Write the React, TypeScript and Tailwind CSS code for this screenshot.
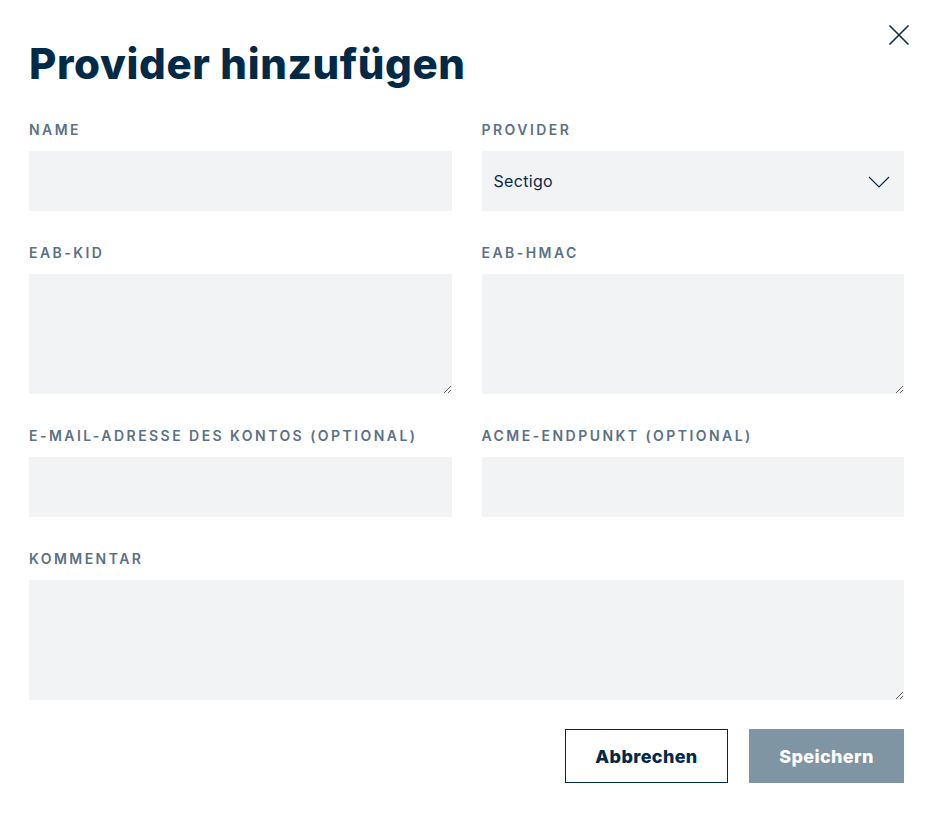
import React, { useState } from 'react';

const labelCls =
  "block h-5 mb-[11px] text-[14px] leading-5 font-semibold uppercase tracking-[0.175em] text-[#5b7185]";
const fieldCls =
  "block w-full bg-[#f2f3f5] text-[16px] tracking-[0.02em] text-[#0b2a45] px-3 outline-none";

function Field({ label, children }: { label: string; children: React.ReactNode }) {
  return (
    <div>
      <label className={labelCls}>{label}</label>
      {children}
    </div>
  );
}

export default function App() {
  const [provider, setProvider] = useState('Sectigo');

  return (
    <div className="min-h-[823px] bg-white font-['Inter',sans-serif] relative">
      <button className="absolute right-[22px] top-[23px] w-6 h-6 text-[#0b2a45]" aria-label="Schließen">
        <svg viewBox="0 0 24 24" width="24" height="24" fill="none" stroke="currentColor" strokeWidth="1.6">
          <path d="M2.5 2.5L21.5 21.5M21.5 2.5L2.5 21.5" />
        </svg>
      </button>

      <div className="px-[29px] pt-[38px]">
        <h1 className="text-[42px] leading-[52px] font-extrabold text-[#012a49] tracking-[0.015em]">
          Provider hinzufügen
        </h1>

        <div className="mt-[30px] grid grid-cols-2 gap-x-[30px] gap-y-[32px]">
          <Field label="Name">
            <input className={fieldCls + " h-[60px]"} />
          </Field>
          <Field label="Provider">
            <div className="relative">
              <select
                value={provider}
                onChange={e => setProvider(e.target.value)}
                className={fieldCls + " h-[60px] appearance-none"}
              >
                <option>Sectigo</option>
                <option>ZeroSSL</option>
                <option>Let's Encrypt</option>
              </select>
              <svg
                className="absolute right-[14px] top-[25px] pointer-events-none text-[#0b2a45]"
                width="22"
                height="12"
                viewBox="0 0 22 12"
                fill="none"
                stroke="currentColor"
                strokeWidth="1.2"
              >
                <path d="M1 1L11 11L21 1" />
              </svg>
            </div>
          </Field>

          <Field label="EAB-KID">
            <textarea className={fieldCls + " h-[120px] py-2"} />
          </Field>
          <Field label="EAB-HMAC">
            <textarea className={fieldCls + " h-[120px] py-2"} />
          </Field>

          <Field label="E-Mail-Adresse des Kontos (optional)">
            <input className={fieldCls + " h-[60px]"} />
          </Field>
          <Field label="ACME-Endpunkt (optional)">
            <input className={fieldCls + " h-[60px]"} />
          </Field>

          <div className="col-span-2">
            <Field label="Kommentar">
              <textarea className={fieldCls + " h-[120px] py-2"} />
            </Field>
          </div>
        </div>

        <div className="mt-[29px] flex justify-end gap-[21px]">
          <button className="w-[163px] h-[54px] border border-[#012a49] text-[#012a49] text-[18px] tracking-[0.02em] font-extrabold">
            Abbrechen
          </button>
          <button className="w-[155px] h-[54px] bg-[#8095a3] text-white text-[18px] tracking-[0.02em] font-extrabold">
            Speichern
          </button>
        </div>
      </div>
    </div>
  );
}
